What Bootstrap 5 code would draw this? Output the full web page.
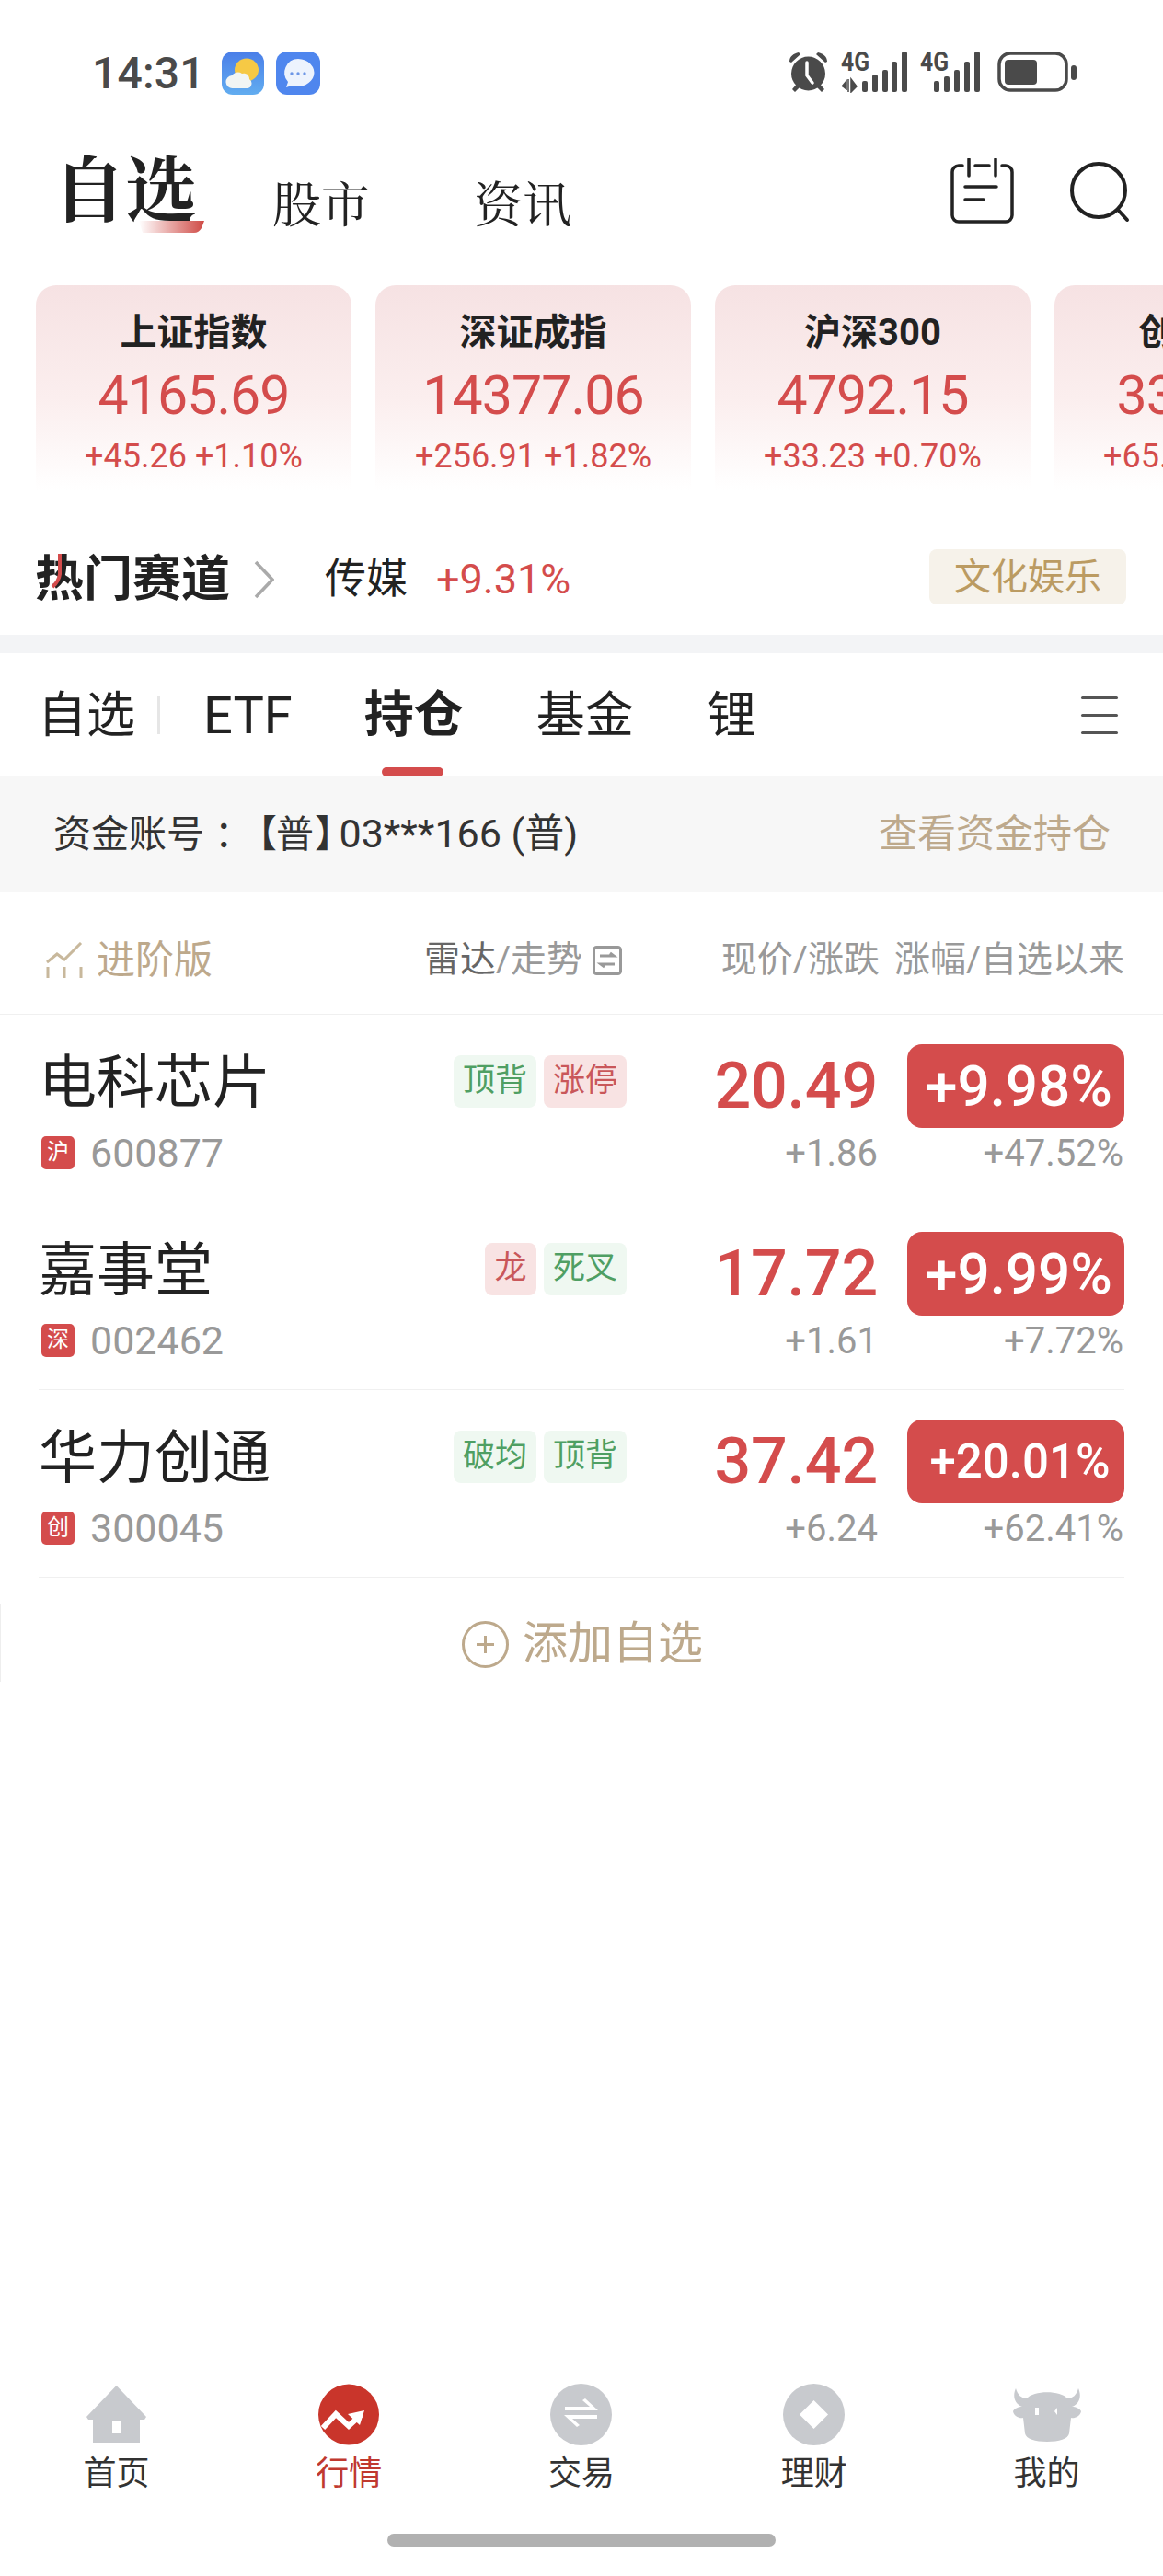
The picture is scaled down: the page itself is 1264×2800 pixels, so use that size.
<!DOCTYPE html>
<html lang="zh-CN">
<head>
<meta charset="utf-8">
<title>自选</title>
<link href="https://cdn.jsdelivr.net/npm/bootstrap@5.3.0/dist/css/bootstrap.min.css" rel="stylesheet">
<style>
:root{--red:#d44c4c;--gold:#bda98c;--ink:#222;--grey:#999;}
html,body{background:#fff;margin:0;}
body{font-family:Roboto,"Noto Sans CJK SC",sans-serif;color:var(--ink);text-spacing-trim:space-all;}
.app-page{width:1264px;height:2800px;overflow:hidden;}
.sb-bar{height:130px;padding:56px 94px 0 100px;}
.sb-time{font-size:48px;line-height:47px;font-weight:500;color:#4a4a4a;letter-spacing:.2px;margin-right:18px;}
.sb-mid{margin-right:13px;}
.sb-gap1{gap:14px;}
.sig-ic{margin-top:-8px;}
.sig-txt{font-family:Roboto,sans-serif;font-weight:700;fill:#4a4a4a;font-size:30px;}
.hd-bar{height:180px;padding:31px 35px 0 58px;}
.hd-main{font-family:"Noto Serif CJK SC","Noto Sans CJK SC",serif;font-weight:700;font-size:78px;line-height:80px;}
.hd-sub{font-family:"Noto Serif CJK SC","Noto Sans CJK SC",serif;font-size:53px;line-height:60px;margin-top:28px;}
.hd-mark{left:93px;top:79px;}
.idx-strip{padding-left:39px;gap:26px;overflow:hidden;height:223px;}
.idx-card{flex:0 0 343px;height:223px;border-radius:22px 22px 0 0;background:linear-gradient(180deg,#f6e2e3 0%,#fbeeee 55%,#fff 100%);padding-top:27px;}
.idx-name{font-size:40px;font-weight:700;line-height:50px;}
.idx-val{font-size:59px;line-height:66px;color:var(--red);font-weight:400;letter-spacing:-.9px;margin-top:10px;}
.idx-sub{font-size:36px;line-height:46px;color:var(--red);margin-top:10px;}
.hot-row{height:151px;padding:64px 40px 0 38px;}
.hot-left{margin-top:3px;}
.hot-h{font-size:53px;font-weight:700;line-height:60px;}
.hot-fire{left:16px;top:0;}
.hot-name{font-size:45px;line-height:60px;margin-left:55px;}
.hot-pct{font-size:45px;line-height:60px;color:var(--red);margin-left:31px;}
.hot-tag{width:214px;height:60px;background:#f6f2ea;color:#bb9b62;border-radius:8px;font-size:40px;line-height:62px;}
.band-gap{height:20px;background:#f3f4f6;margin-top:6px;}
.tab-bar{height:133px;padding:2px 49px 0 41px;}
.tab-it{font-size:53px;line-height:60px;color:var(--ink);}
.tab-sep{width:3px;height:41px;background:#e6e6e6;margin:0 47px 0 24px;}
.tab-etf{font-size:56px;}
.tab-on{font-weight:700;font-size:54px;margin-left:78px;align-self:stretch;line-height:131px;}
.tab-fund{margin-left:79px;}
.tab-li{margin-left:80px;}
.tab-line{position:absolute;left:19px;bottom:-1px;width:67px;height:10px;border-radius:5px;background:var(--red);}
.tab-menu{width:40px;gap:16px;}
.tab-menu i{display:block;height:3px;background:#555;border-radius:2px;}
.acct-bar{height:127px;background:#f7f7f7;padding:0 57px 0 58px;font-size:41px;color:#333;}
.acct-tight{font-feature-settings:"palt";}
.acct-col{margin-left:11px;}
.acct-bl{margin-left:26px;}
.acct-br{margin-left:2px;}
.acct-no{font-size:43px;margin-left:5px;}
.acct-link{color:var(--gold);font-size:42px;}
.list-hd{height:133px;border-bottom:1px solid #f0f0f0;padding:15px 42px 0 50px;font-size:39px;color:var(--grey);}
.lh-gold{color:var(--gold);font-size:42px;margin-left:15px;}
.lh-mid{margin-left:230px;}
.lh-dark{color:#666;}
.lh-ic{margin-left:11px;}
.lh-c1{margin-right:16px;}
.stk-row{height:204px;margin:0 42px;border-bottom:1px solid #f0f0f0;padding-top:32px;}
.stk-left{width:639px;}
.stk-top{height:91px;padding-bottom:10px;}
.stk-name{font-size:63px;line-height:70px;margin-top:2px;}
.stk-tags{gap:8px;}
.stk-tag{height:57px;min-width:56px;padding:0 10px;border-radius:8px;font-size:35px;line-height:55px;text-align:center;}
.tg-g{background:#eff8f1;color:#4f9f63;}
.tg-r{background:#f8e3e3;color:#c9575a;}
.stk-code{font-size:43px;line-height:54px;color:var(--grey);}
.mk-box{width:36px;height:36px;border-radius:5px;background:var(--red);color:#fff;font-size:24px;line-height:34px;text-align:center;margin:0 17px 0 3px;}
.stk-mid{width:273px;}
.stk-price{height:91px;font-size:70px;line-height:91px;color:var(--red);font-weight:500;letter-spacing:-.2px;}
.stk-sub{font-size:40px;line-height:56px;color:var(--grey);}
.stk-right{width:236px;margin-left:32px;}
.stk-pill{height:91px;border-radius:16px;background:var(--red);color:#fff;font-size:62px;line-height:91px;font-weight:500;text-align:center;padding-left:7px;}
.stk-pill-sm{font-size:51px;padding-left:9px;}
.stk-subr{padding-right:1px;}
.add-row{height:144px;gap:15px;color:var(--gold);font-size:49px;line-height:60px;padding-left:2px;}
.edge-mark{left:0;top:28px;width:1px;height:85px;background:#eee;}
.nav-bot{margin-top:auto;}
.nav-it{flex:1 1 0;}
.nav-ic{height:70px;}
.nav-lb{font-size:36px;line-height:46px;color:#333;margin-top:7px;}
.nav-on{color:#c0392f;}
.home-ind{width:422px;height:14px;border-radius:7px;background:#b1b1b1;margin:42px auto 32px;}
</style>
</head>
<body>
<div class="app-page d-flex flex-column">

  <div class="sb-bar d-flex justify-content-between">
    <div class="d-flex">
      <span class="sb-time">14:31</span>
      <svg class="sb-mid" width="46" height="47" viewBox="0 0 46 47"><defs><linearGradient id="wx" x1="0" y1="0" x2="0" y2="1"><stop offset="0" stop-color="#4a7ee8"/><stop offset="1" stop-color="#62adf0"/></linearGradient></defs><rect width="46" height="47" rx="12" fill="url(#wx)"/><ellipse cx="27" cy="20" rx="13" ry="12.500" fill="#f6c945"/><path d="M12 40a7 7 0 0 1-1-14 8 8 0 0 1 11-2 6 6 0 0 1 8 6 5.500 5.500 0 0 1-2 10z" fill="#f1f5f4"/></svg>
      <svg width="48" height="47" viewBox="0 0 48 47"><rect width="48" height="47" rx="12" fill="#4f86ee"/><path d="M24 8a18 15 0 1 1-7 29l-6 2 2-6a15 15 0 0 1 11-25z" fill="#edf3fd"/><circle cx="17" cy="24" r="1.700" fill="#6d97e6"/><circle cx="24" cy="24" r="1.700" fill="#6d97e6"/><circle cx="31" cy="24" r="1.700" fill="#6d97e6"/></svg>
    </div>
    <div class="d-flex sb-gap1 align-items-start">
      <svg width="43" height="45" viewBox="0 0 43 45"><path d="M1 11C1 5 6 2 11 1l2 2-10 9zM42 11c0-6-5-9-10-10l-2 2 10 9z" fill="#4a4a4a"/><path d="M10 34l-6 7 3 3 7-7zM33 34l6 7-3 3-7-7z" fill="#4a4a4a"/><circle cx="21.500" cy="24" r="18.500" fill="#4a4a4a"/><path d="M20 12v14l6 8" fill="none" stroke="#fff" stroke-width="3.500" stroke-linecap="round"/></svg>
      <svg class="sig-ic" width="72" height="53" viewBox="0 -8 72 53"><text class="sig-txt" x="0" y="21" textLength="31" lengthAdjust="spacingAndGlyphs">4G</text><path d="M8 30v14M1 38l5-6v10M11 30v14l6-6z" fill="#4a4a4a" stroke="#4a4a4a" stroke-width="1.500"/><g fill="#4a4a4a"><rect x="23" y="32" width="6" height="12" rx="2"/><rect x="34" y="25" width="6" height="19" rx="2"/><rect x="45" y="20" width="6" height="24" rx="2"/><rect x="55" y="11" width="6" height="33" rx="2"/><rect x="66" y="0" width="6" height="44" rx="2"/></g></svg>
      <svg class="sig-ic" width="65" height="53" viewBox="0 -8 65 53" style="margin-right:5px"><text class="sig-txt" x="0" y="21" textLength="31" lengthAdjust="spacingAndGlyphs">4G</text><g fill="#4a4a4a"><rect x="15" y="32" width="6" height="12" rx="2"/><rect x="26" y="27" width="6" height="17" rx="2"/><rect x="37" y="20" width="6" height="24" rx="2"/><rect x="48" y="11" width="6" height="33" rx="2"/><rect x="59" y="0" width="6" height="44" rx="2"/></g></svg>
      <svg width="86" height="44" viewBox="0 0 86 44"><rect x="2" y="2" width="73" height="40" rx="12" fill="none" stroke="#4a4a4a" stroke-width="3.500"/><rect x="8" y="9" width="35" height="27" rx="4" fill="#4a4a4a"/><rect x="80" y="15" width="6" height="16" rx="3" fill="#4a4a4a"/></svg>
    </div>
  </div>

  <div class="hd-bar d-flex justify-content-between align-items-start">
    <div class="d-flex">
      <div class="hd-main position-relative">自选<svg class="hd-mark position-absolute" width="71" height="13" viewBox="0 0 71 13"><defs><linearGradient id="mk" x1="0" y1="0" x2="1" y2="0"><stop offset="0" stop-color="#cf4a45" stop-opacity="0"/><stop offset="1" stop-color="#cf4a45"/></linearGradient></defs><path d="M0 0H71L68 8Q65 13 60 13H4Z" fill="url(#mk)"/></svg></div>
      <div class="hd-sub" style="margin-left:82px">股市</div>
      <div class="hd-sub" style="margin-left:113px">资讯</div>
    </div>
    <div class="d-flex align-items-start" style="gap:60px;margin-top:11px">
      <svg width="70" height="72" viewBox="0 0 70 72" fill="none" stroke="#222" stroke-width="3.500" stroke-linecap="round"><path d="M13 8H9a7 7 0 0 0-7 7v47a7 7 0 0 0 7 7h51a7 7 0 0 0 7-7V15a7 7 0 0 0-7-7h-4M27 8h15M20 1v18M49 1v18M16 31h34M16 45h20"/></svg>
      <svg width="66" height="66" viewBox="0 0 66 66" fill="none" stroke="#222" stroke-width="4" stroke-linecap="round" style="margin-top:4px"><circle cx="31" cy="31" r="29"/><path d="M52 52l10 11"/></svg>
    </div>
  </div>

  <div class="idx-strip d-flex">
    <div class="idx-card text-center"><div class="idx-name">上证指数</div><div class="idx-val">4165.69</div><div class="idx-sub">+45.26 +1.10%</div></div>
    <div class="idx-card text-center"><div class="idx-name">深证成指</div><div class="idx-val">14377.06</div><div class="idx-sub">+256.91 +1.82%</div></div>
    <div class="idx-card text-center"><div class="idx-name">沪深300</div><div class="idx-val">4792.15</div><div class="idx-sub">+33.23 +0.70%</div></div>
    <div class="idx-card text-center"><div class="idx-name">创业板指</div><div class="idx-val">3345.07</div><div class="idx-sub">+65.41 +1.98%</div></div>
  </div>

  <div class="hot-row d-flex justify-content-between align-items-start">
    <div class="hot-left d-flex align-items-center">
      <div class="hot-h position-relative">热门赛道<svg class="hot-fire position-absolute" width="14" height="40" viewBox="0 0 14 40"><path d="M11 2v22Q10 32 3 38" fill="none" stroke="#d44c4c" stroke-width="4"/></svg></div>
      <svg width="22" height="42" viewBox="0 0 22 42" style="margin-left:26px"><path d="M2 2l18 19L2 40" fill="none" stroke="#aaa" stroke-width="3.500"/></svg>
      <span class="hot-name">传媒</span>
      <span class="hot-pct">+9.31%</span>
    </div>
    <div class="hot-tag text-center">文化娱乐</div>
  </div>

  <div class="band-gap"></div>

  <div class="tab-bar d-flex align-items-center">
    <span class="tab-it">自选</span><span class="tab-sep"></span>
    <span class="tab-it tab-etf">ETF</span>
    <span class="tab-it tab-on position-relative">持仓<i class="tab-line"></i></span>
    <span class="tab-it tab-fund">基金</span>
    <span class="tab-it tab-li">锂</span>
    <span class="tab-menu d-flex flex-column ms-auto"><i></i><i></i><i></i></span>
  </div>

  <div class="acct-bar d-flex justify-content-between align-items-center">
    <div class="text-nowrap">资金账号<span class="acct-tight acct-col">：</span><span class="acct-tight acct-bl">【</span>普<span class="acct-tight acct-br">】</span><span class="acct-no">03***166 (普)</span></div>
    <div class="acct-link">查看资金持仓</div>
  </div>

  <div class="list-hd d-flex align-items-center">
    <svg width="40" height="40" viewBox="0 0 40 40" fill="none" stroke="#c8b89c" stroke-width="3"><path d="M1 22l11-9 8 6L38 1M2 27v12M20 27v12M38 27v12"/></svg>
    <span class="lh-gold">进阶版</span>
    <span class="lh-mid d-flex align-items-center"><span><span class="lh-dark">雷达</span>/走势</span>
    <svg class="lh-ic" width="32" height="32" viewBox="0 0 32 32" fill="none" stroke="#999" stroke-width="3"><rect x="1.500" y="1.500" width="29" height="29" rx="3"/><path d="M8 11h15l-4-3M24 20H9l4 3"/></svg></span>
    <span class="lh-c1 ms-auto">现价/涨跌</span>
    <span>涨幅/自选以来</span>
  </div>

  <div class="stk-row d-flex">
    <div class="stk-left">
      <div class="stk-top d-flex justify-content-between align-items-center"><span class="stk-name">电科芯片</span><span class="stk-tags d-flex"><span class="stk-tag tg-g">顶背</span><span class="stk-tag tg-r">涨停</span></span></div>
      <div class="stk-code d-flex align-items-center"><span class="mk-box">沪</span>600877</div>
    </div>
    <div class="stk-mid text-end"><div class="stk-price">20.49</div><div class="stk-sub">+1.86</div></div>
    <div class="stk-right text-end"><div class="stk-pill">+9.98%</div><div class="stk-sub stk-subr">+47.52%</div></div>
  </div>

  <div class="stk-row d-flex">
    <div class="stk-left">
      <div class="stk-top d-flex justify-content-between align-items-center"><span class="stk-name">嘉事堂</span><span class="stk-tags d-flex"><span class="stk-tag tg-r">龙</span><span class="stk-tag tg-g">死叉</span></span></div>
      <div class="stk-code d-flex align-items-center"><span class="mk-box">深</span>002462</div>
    </div>
    <div class="stk-mid text-end"><div class="stk-price">17.72</div><div class="stk-sub">+1.61</div></div>
    <div class="stk-right text-end"><div class="stk-pill">+9.99%</div><div class="stk-sub stk-subr">+7.72%</div></div>
  </div>

  <div class="stk-row d-flex">
    <div class="stk-left">
      <div class="stk-top d-flex justify-content-between align-items-center"><span class="stk-name">华力创通</span><span class="stk-tags d-flex"><span class="stk-tag tg-g">破均</span><span class="stk-tag tg-g">顶背</span></span></div>
      <div class="stk-code d-flex align-items-center"><span class="mk-box">创</span>300045</div>
    </div>
    <div class="stk-mid text-end"><div class="stk-price">37.42</div><div class="stk-sub">+6.24</div></div>
    <div class="stk-right text-end"><div class="stk-pill stk-pill-sm">+20.01%</div><div class="stk-sub stk-subr">+62.41%</div></div>
  </div>

  <div class="add-row d-flex justify-content-center align-items-center position-relative">
    <i class="edge-mark position-absolute"></i>
    <svg width="51" height="51" viewBox="0 0 51 51" fill="none" stroke="#bda98c" stroke-width="3"><circle cx="25.500" cy="25.500" r="24"/><path d="M25.500 16v19M16 25.500h19"/></svg>
    <span>添加自选</span>
  </div>

  <div class="nav-bot">
    <div class="d-flex">
      <div class="nav-it text-center">
        <div class="nav-ic d-flex justify-content-center align-items-center"><svg width="65" height="62" viewBox="0 0 65 62"><path fill-rule="evenodd" d="M32.500 0L65 34l-2 3h-5v25H7V37H2l-2-3zM28 39v13h10V39z" fill="#c8cace"/></svg></div>
        <div class="nav-lb">首页</div>
      </div>
      <div class="nav-it text-center">
        <div class="nav-ic d-flex justify-content-center align-items-center"><svg width="66" height="67" viewBox="0 0 66 67"><circle cx="33" cy="33.500" r="33" fill="#c9352b"/><path d="M5 48L19 33l14 13 13-12" fill="none" stroke="#fff" stroke-width="6"/><path d="M50 29L32 33l13 12z" fill="#fff"/></svg></div>
        <div class="nav-lb nav-on">行情</div>
      </div>
      <div class="nav-it text-center">
        <div class="nav-ic d-flex justify-content-center align-items-center"><svg width="67" height="67" viewBox="0 0 67 67"><circle cx="33.500" cy="33.500" r="33.500" fill="#c8cace"/><path d="M16 25h27l-8-7 3-2 14 13H16zM51 38H24l8 7-3 2-14-13h36z" fill="#fff"/></svg></div>
        <div class="nav-lb">交易</div>
      </div>
      <div class="nav-it text-center">
        <div class="nav-ic d-flex justify-content-center align-items-center"><svg width="67" height="67" viewBox="0 0 67 67"><circle cx="33.500" cy="33.500" r="33.500" fill="#c8cace"/><path d="M33.500 18L49 33.500 33.500 49 18 33.500z" fill="#fff"/></svg></div>
        <div class="nav-lb">理财</div>
      </div>
      <div class="nav-it text-center">
        <div class="nav-ic d-flex justify-content-center align-items-center"><svg width="74" height="59" viewBox="0 0 74 59"><path fill-rule="evenodd" d="M3 1C5 8 9 12 15 12C22 3 52 3 59 12C65 12 69 8 71 1C75 10 72 18 64 21C68 21 73 23 74 26C73 32 66 34 63 33L61 50C60 56 50 59 37 59C24 59 14 56 13 50L11 33C8 34 1 32 0 26C1 23 6 21 10 21C2 18-1 10 3 1ZM24 22v8h4v-8zM45 26l3 4v-8z" fill="#c8cace"/></svg></div>
        <div class="nav-lb">我的</div>
      </div>
    </div>
    <div class="home-ind"></div>
  </div>
</div>
<script src="https://cdn.jsdelivr.net/npm/bootstrap@5.3.0/dist/js/bootstrap.bundle.min.js"></script>
</body>
</html>
